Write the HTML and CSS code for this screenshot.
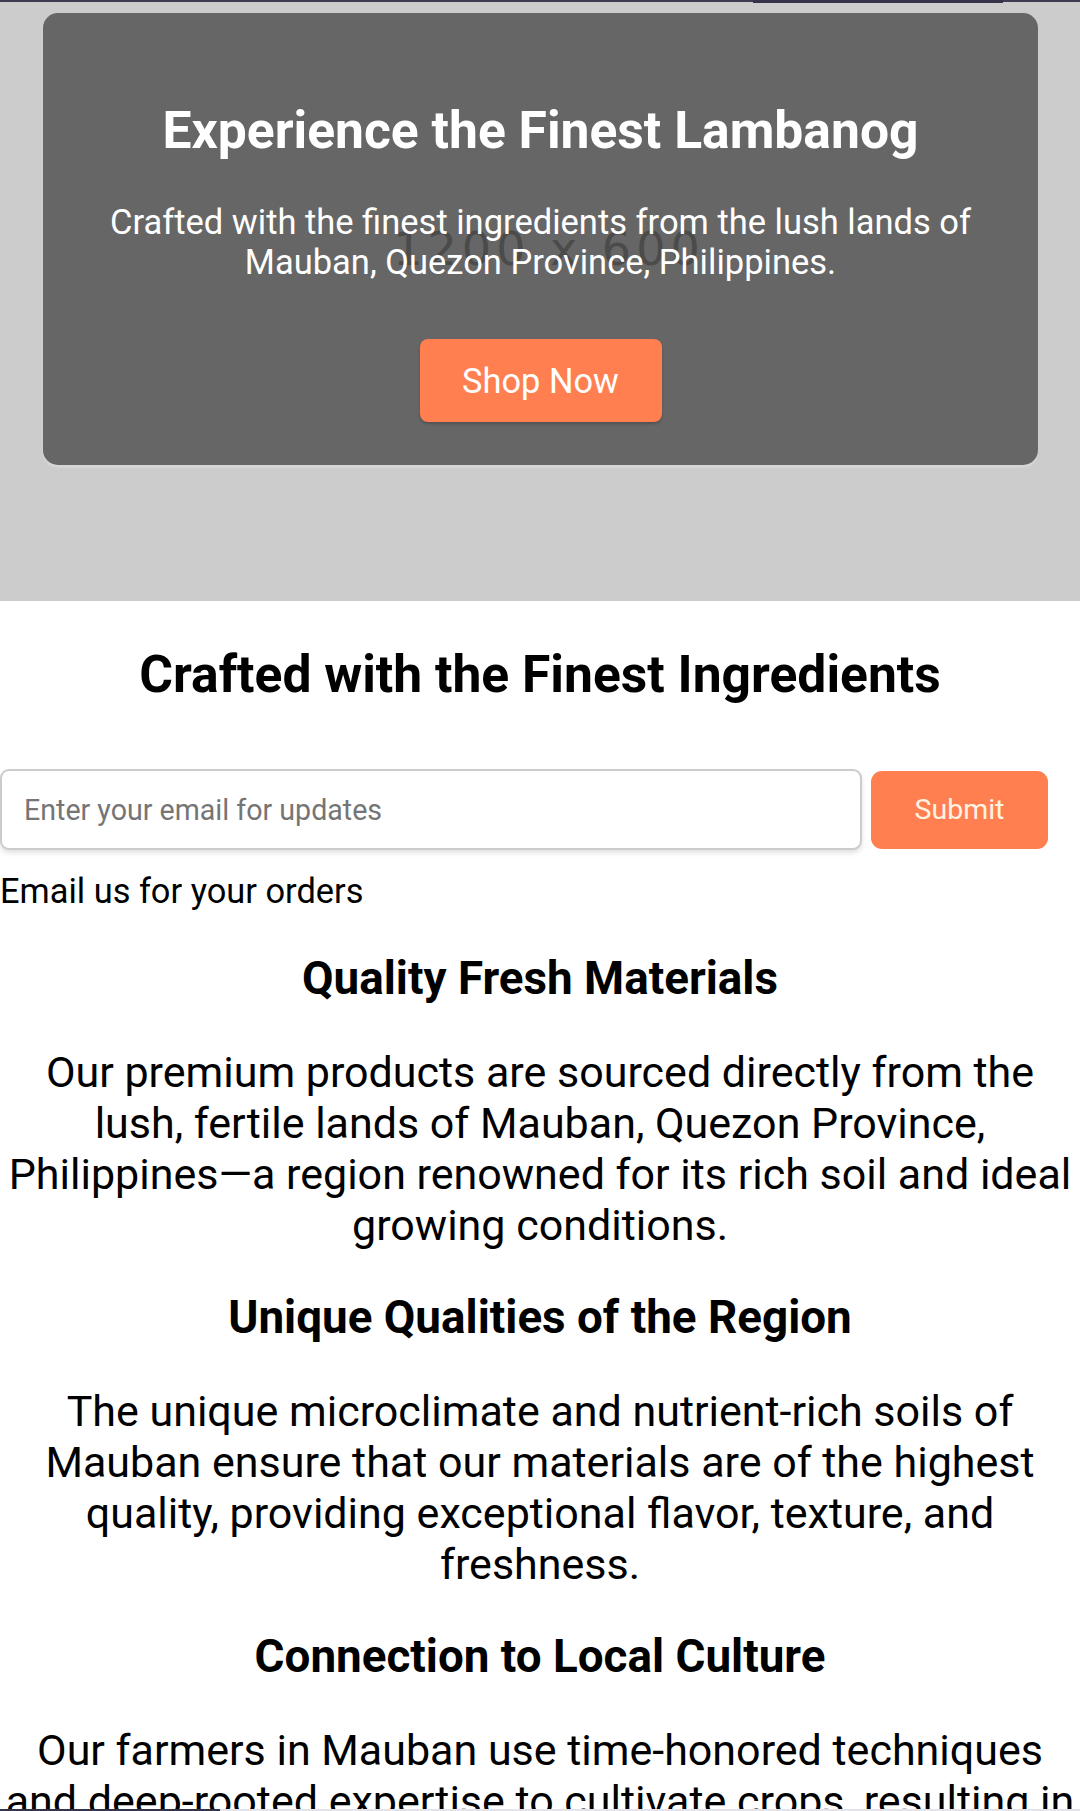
FILE: index.html
```html
<!DOCTYPE html>
<html lang="en">
<head>
<meta charset="utf-8">
<title>Lambanog</title>
<link rel="stylesheet" href="styles.css">
</head>
<body>
<div class="topbar"><span class="topbar-tab"></span></div>
<section class="hero">
  <span class="hero-placeholder">1200 x 600</span>
  <div class="hero-card">
    <h1 class="hero-title">Experience the Finest Lambanog</h1>
    <p class="hero-text">Crafted with the finest ingredients from the lush lands of Mauban, Quezon Province, Philippines.</p>
    <a class="btn btn-shop" href="#">Shop Now</a>
  </div>
</section>
<section class="ingredients">
  <h2 class="section-title">Crafted with the Finest Ingredients</h2>
  <form class="subscribe">
    <input class="subscribe-input" type="email" placeholder="Enter your email for updates">
    <button class="btn btn-submit" type="button">Submit</button>
  </form>
  <p class="note">Email us for your orders</p>
  <div class="feature">
    <h3 class="feature-title">Quality Fresh Materials</h3>
    <p class="feature-text">Our premium products are sourced directly from the lush, fertile lands of Mauban, Quezon Province, Philippines—a region renowned for its rich soil and ideal growing conditions.</p>
  </div>
  <div class="feature">
    <h3 class="feature-title">Unique Qualities of the Region</h3>
    <p class="feature-text">The unique microclimate and nutrient-rich soils of Mauban ensure that our materials are of the highest quality, providing exceptional flavor, texture, and freshness.</p>
  </div>
  <div class="feature">
    <h3 class="feature-title">Connection to Local Culture</h3>
    <p class="feature-text">Our farmers in Mauban use time-honored techniques and deep-rooted expertise to cultivate crops, resulting in products that reflect the rich heritage of the region.</p>
  </div>
</section>
<div class="bottombar"><span class="bottombar-tab"></span></div>
</body>
</html>
```
FILE: styles.css
```css
* { box-sizing: border-box; }
html, body { margin: 0; padding: 0; }
body {
  font-family: Roboto, "Noto Sans", "Liberation Sans", sans-serif;
  color: #000;
  background: #fff;
}

.topbar {
  height: 2px;
  background: #3c3b52;
  position: relative;
  z-index: 2;
}
.topbar-tab {
  position: absolute;
  left: 753px;
  top: 0;
  width: 250px;
  height: 3px;
  background: #34334a;
}

.hero {
  position: relative;
  height: 599px;
  background: #cccccc;
  padding: 11px 42px 0 43px;
  overflow: hidden;
}
.hero-placeholder {
  position: absolute;
  left: 18px;
  right: 0;
  top: 220px;
  text-align: center;
  font-family: "DejaVu Sans", sans-serif;
  font-size: 46px;
  line-height: normal;
  letter-spacing: 5px;
  color: #969696;
}
.hero-card {
  position: relative;
  background: rgba(0, 0, 0, 0.5);
  border-radius: 15px;
  padding: 43px 40px;
  text-align: center;
  color: #fff;
  box-shadow: 0 3px 2px rgba(255, 255, 255, 0.2);
}
.hero-title {
  margin: 44px 0 41px;
  font-size: 51.6px;
  font-weight: 700;
  line-height: normal;
}
.hero-text {
  margin: 0 0 57px;
  font-size: 34.5px;
  line-height: normal;
}
.btn {
  background: #ff7f50;
  border: none;
  color: #fff;
  font-family: Roboto, "Noto Sans", sans-serif;
  text-decoration: none;
  display: inline-flex;
  align-items: center;
  justify-content: center;
}
.btn-shop {
  width: 242px;
  height: 83px;
  border-radius: 8px;
  font-size: 34.4px;
  box-shadow: 0 2px 3px rgba(0, 0, 0, 0.2);
}

.ingredients {
  text-align: center;
  padding-top: 43px;
}
.section-title {
  margin: 0 0 64px;
  font-size: 51.6px;
  font-weight: 700;
  line-height: normal;
}
.subscribe {
  display: flex;
  align-items: center;
  gap: 9px;
  padding-right: 32px;
}
.subscribe-input {
  flex: 1;
  height: 81px;
  border: 2px solid #cccccc;
  border-radius: 9px;
  padding: 0 22px;
  font-family: Roboto, "Noto Sans", sans-serif;
  font-size: 28.6px;
  color: #333;
  box-shadow: 0 3px 5px rgba(0, 0, 0, 0.12);
  outline: none;
}
.subscribe-input::placeholder { color: #757575; }
.btn-submit {
  width: 177px;
  height: 78px;
  border-radius: 11px;
  font-size: 28.5px;
  color: #fff3e3;
}
.note {
  margin: 21px 0 0;
  text-align: left;
  font-size: 34.4px;
  line-height: normal;
}
.feature-title {
  margin: 41px 0 42px;
  font-size: 45.8px;
  font-weight: 700;
  line-height: normal;
}
.feature-text {
  margin: 0;
  font-size: 43px;
  line-height: 51px;
}
.feature + .feature .feature-title {
  margin-top: 40px;
}

.bottombar {
  position: fixed;
  left: 0;
  right: 0;
  bottom: 0;
  height: 2px;
  background: #e4e3ec;
}
.bottombar-tab {
  position: absolute;
  left: 0;
  top: 0;
  width: 220px;
  height: 2px;
  background: #34334a;
}
```
